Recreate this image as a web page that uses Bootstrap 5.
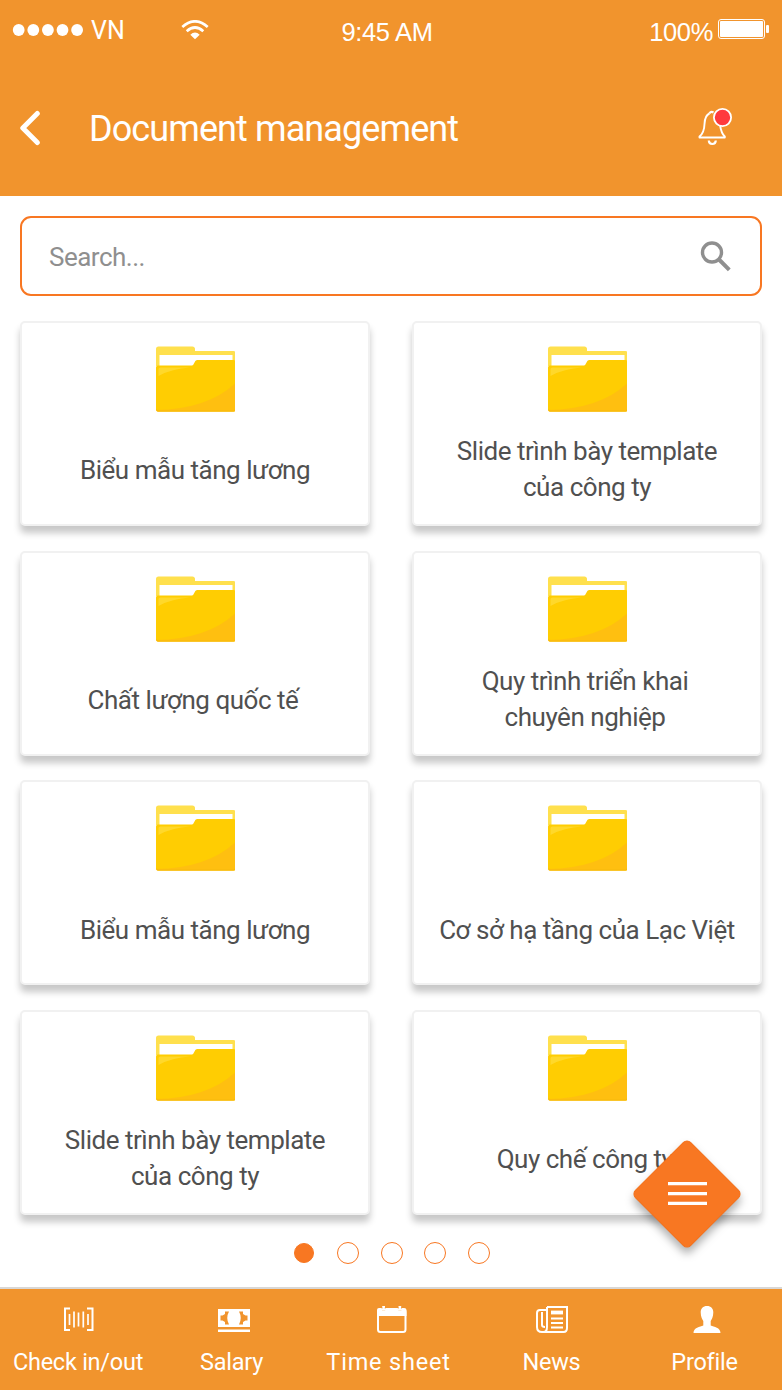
<!DOCTYPE html>
<html lang="vi">
<head>
<meta charset="utf-8">
<meta name="viewport" content="width=device-width, initial-scale=1">
<title>Document management</title>
<link href="https://cdn.jsdelivr.net/npm/bootstrap@5.3.0/dist/css/bootstrap.min.css" rel="stylesheet">
<style>
  body { font-family: Roboto, "Noto Sans", sans-serif; color: #505050; background: #fff; }
  .app { width: 782px; height: 1390px; overflow: hidden; }
  svg { display: block; flex: none; }
  .app-head { height: 196px; background: #f1942d; color: #fff; }
  .status { height: 60px; font-size: 25.5px; line-height: 30px; }
  .status > div { flex: 1 1 0; }
  .carrier { font-size: 25px; font-weight: 400; margin-left: 3px; padding-top: 1px; }
  .wifi { margin-right: 52px; margin-top: -1px; }
  .arial { font-family: "Liberation Sans", Arial, sans-serif; letter-spacing: -.35px; }
  .clock { padding-right: 4px; }
  .battery { margin: 2px 0 0 4px; }
  .title-row { height: 136px; padding: 0 48px 0 18px; }
  .page-title { font-size: 36px; line-height: 42px; font-weight: 400; letter-spacing: -.9px; margin: 2px 0 0 49px; }
  .search { height: 80px; margin: 20px 20px 0; padding: 0 28px 0 27px; border: 2px solid #f87722; border-radius: 11px; }
  .search input { font-size: 26px; line-height: 32px; letter-spacing: -.5px; color: #505050; padding-top: 2px !important; }
  .search input::placeholder { color: #8f8f8f; opacity: 1; }
  .docs { display: grid; grid-template-columns: 350px 350px; column-gap: 42px; row-gap: 24.67px; grid-auto-rows: 205px; margin: 25px 20px 0; }
  .doc { border: 2px solid #f1f1f1; border-radius: 5px; background: #fff; box-shadow: 0 7px 7px rgba(0,0,0,.22); padding-top: 23px; color: #505050; }
  .doc-name { height: 72px; margin-top: 21.3px; font-size: 26px; line-height: 36px; letter-spacing: -.47px; text-align: center; }
  .doc-name.single { padding-top: 2px; }
  .dots { margin: 27px 0 0 293px; gap: 21.8px; height: 22px; }
  .dots span { width: 22px; height: 22px; border: 1px solid #f87722; border-radius: 50%; }
  .dots span.on { width: 20px; height: 20px; margin: 0 1px; background: #f87722; }
  .fab { left: 631px; top: 1138px; filter: drop-shadow(0 6px 4px rgba(0,0,0,.3)); }
  .tabs { height: 103px; border-top: 2px solid #d9d7d5; background: #f1942d; }
  .tabs a { color: #fff; text-decoration: none; font-size: 23.5px; line-height: 28px; letter-spacing: -.25px; padding-top: 14px; white-space: nowrap; }
  .tabs a.wide { letter-spacing: .8px; }
  .tabs svg { margin-bottom: 13px; }
</style>
</head>
<body>
<svg width="0" height="0" class="position-absolute" aria-hidden="true">
  <symbol id="folder" viewBox="0 0 80 66">
    <path d="M0 20V3Q0 .5 2.500 .5H36.500Q38.500 .5 39 2.500V5H77.500Q79.500 5 79.500 7V20Z" fill="#ffe04d"/>
    <path d="M3.500 9H76.500V24H3.500Z" fill="#fff"/>
    <path d="M0 21.500Q0 19.500 2 19.500H36Q37.500 19 38.500 16.500Q39.300 14 41 14H77.500Q79.500 14 79.500 16V63.500Q79.500 65.500 77.500 65.500H2Q0 65.500 0 63.500Z" fill="#ffcd02"/>
    <path d="M79.500 37V63.500Q79.500 65.500 77.500 65.500H2Q.5 65.500 .3 64Q52 63 79.500 37Z" fill="#ffbf10"/>
    <path d="M2.500 30V23Q2.500 21.500 4.500 21.500H34Q16 22.500 2.500 30Z" fill="#ffd82b"/>
    <path d="M.5 63.500Q.7 65 2 65H77.500Q79 65 79 63.500" fill="none" stroke="#f6b80c"/>
  </symbol>
</svg>
<main class="app position-relative mx-auto d-flex flex-column">
  <header class="app-head">
    <div class="status d-flex align-items-center">
      <div class="d-flex align-items-center ps-2">
        <svg width="80" height="14" viewBox="0 0 80 14" fill="#fff"><circle cx="10.700" cy="7" r="5.900"/><circle cx="25.300" cy="7" r="5.900"/><circle cx="39.900" cy="7" r="5.900"/><circle cx="54.500" cy="7" r="5.900"/><circle cx="69.100" cy="7" r="5.900"/></svg>
        <span class="carrier">VN</span>
        <svg class="wifi ms-auto" width="28" height="20" viewBox="0 0 28 20" fill="none" stroke="#fff" stroke-width="2.700"><path d="M1.300 7Q14-4.300 26.700 7M5.700 11.200Q14 3.800 22.300 11.200"/><path d="M9.300 14.700Q14 10.300 18.700 14.700L14 19.200Z" fill="#fff" stroke="none"/></svg>
      </div>
      <div class="arial clock text-center pt-1">9:45 AM</div>
      <div class="arial d-flex justify-content-end pe-2 me-1 pt-1">100%
        <svg class="battery" width="53" height="22" viewBox="0 0 53 22"><rect x="1.500" y=".5" width="46" height="19" rx="2.500" fill="none" stroke="#fff"/><rect x="3" y="2" width="43" height="16" rx="1" fill="#fff"/><rect x="49" y="6" width="3" height="8" rx="1" fill="#fff"/></svg>
      </div>
    </div>
    <div class="title-row d-flex align-items-center">
      <svg width="22" height="36" viewBox="0 0 22 36" fill="none" stroke="#fff" stroke-width="5" stroke-linecap="round" stroke-linejoin="round"><path d="M19.300 3.500L4.800 18L19.300 32.500"/></svg>
      <h1 class="page-title">Document management</h1>
      <svg class="ms-auto mb-1" width="36" height="40" viewBox="0 0 36 40"><path d="M11.500 7.500C7.500 9 6.700 14 6.500 18C6.300 24 4.800 28 1.500 30.500V31.500H26.800V30.500C23.800 28 22.800 24 22 19" fill="none" stroke="#fff" stroke-width="1.900" stroke-linejoin="round"/><path d="M11.300 7.500Q13 5 15.500 6.500" fill="none" stroke="#fff" stroke-width="2.200"/><path d="M10.800 34.500Q11 38 14.300 38Q17.600 38 17.800 34.500" fill="none" stroke="#fff" stroke-width="2.200"/><circle cx="24.500" cy="11.500" r="8.600" fill="#ff3a3d" stroke="#fff" stroke-width="1.800"/></svg>
    </div>
  </header>
  <div class="search d-flex align-items-center">
    <input class="border-0 p-0 bg-transparent flex-grow-1" type="text" placeholder="Search..." aria-label="Search">
    <svg width="32" height="32" viewBox="0 0 32 32" fill="none" stroke="#8f8f8f"><circle cx="12" cy="12.500" r="9.500" stroke-width="3.400"/><path d="M18.500 19L29.300 29.800" stroke-width="4"/></svg>
  </div>
  <section class="docs">
    <a class="doc d-flex flex-column align-items-center text-decoration-none"><svg width="79" height="66" viewBox="0 0 79 66"><use href="#folder" width="80" height="66"/></svg><span class="doc-name single d-flex align-items-center">Biểu mẫu tăng lương</span></a>
    <a class="doc d-flex flex-column align-items-center text-decoration-none"><svg width="79" height="66" viewBox="0 0 79 66"><use href="#folder" width="80" height="66"/></svg><span class="doc-name d-flex align-items-center"><span>Slide trình bày template<br>của công ty</span></span></a>
    <a class="doc d-flex flex-column align-items-center text-decoration-none"><svg width="79" height="66" viewBox="0 0 79 66"><use href="#folder" width="80" height="66"/></svg><span class="doc-name single d-flex align-items-center pe-1">Chất lượng quốc tế</span></a>
    <a class="doc d-flex flex-column align-items-center text-decoration-none"><svg width="79" height="66" viewBox="0 0 79 66"><use href="#folder" width="80" height="66"/></svg><span class="doc-name d-flex align-items-center pe-1"><span>Quy trình triển khai<br>chuyên nghiệp</span></span></a>
    <a class="doc d-flex flex-column align-items-center text-decoration-none"><svg width="79" height="66" viewBox="0 0 79 66"><use href="#folder" width="80" height="66"/></svg><span class="doc-name single d-flex align-items-center">Biểu mẫu tăng lương</span></a>
    <a class="doc d-flex flex-column align-items-center text-decoration-none"><svg width="79" height="66" viewBox="0 0 79 66"><use href="#folder" width="80" height="66"/></svg><span class="doc-name single d-flex align-items-center">Cơ sở hạ tầng của Lạc Việt</span></a>
    <a class="doc d-flex flex-column align-items-center text-decoration-none"><svg width="79" height="66" viewBox="0 0 79 66"><use href="#folder" width="80" height="66"/></svg><span class="doc-name d-flex align-items-center"><span>Slide trình bày template<br>của công ty</span></span></a>
    <a class="doc d-flex flex-column align-items-center text-decoration-none"><svg width="79" height="66" viewBox="0 0 79 66"><use href="#folder" width="80" height="66"/></svg><span class="doc-name single d-flex align-items-center pe-1">Quy chế công ty</span></a>
  </section>
  <div class="dots d-flex align-items-center"><span class="on"></span><span></span><span></span><span></span><span></span></div>
  <svg class="fab position-absolute" width="112" height="112" viewBox="0 0 112 112"><rect x="17" y="17" width="78" height="78" rx="5" transform="rotate(45 56 56)" fill="#f87722" stroke="#f3701a"/><path d="M37 45.700H76M37 55.700H76M37 65.300H76" stroke="#fff" stroke-width="3.200"/></svg>
  <nav class="tabs d-flex mt-auto">
    <a class="d-flex flex-column align-items-center" style="width:156px"><svg width="32" height="32" viewBox="0 0 32 32" fill="none" stroke="#fff"><path d="M8 5.500H3V27H8M25 5.500H30.500V27H25" stroke-width="2"/><path d="M7.500 11V22M12 8.500V24.500M16.500 9.500V23.500M21.300 8.500V24.500M26 11V22" stroke-width="1.700"/></svg>Check in/out</a>
    <a class="d-flex flex-column align-items-center" style="width:151px"><svg class="ms-1" width="32" height="32" viewBox="0 0 32 32"><path fill="#fff" d="M0 6H32V24H0ZM0 26.500H32V29H0Z"/><path fill="#f1942d" d="M7 8.500H11Q7.500 15 11 21.500H7V19L4.500 17.500H2.500V12.500H4.500L7 11ZM25 8.500H21Q24.500 15 21 21.500H25V19L27.500 17.500H29.500V12.500H27.500L25 11Z"/></svg>Salary</a>
    <a class="wide d-flex flex-column align-items-center" style="width:163px"><svg style="margin-left:6px" width="32" height="32" viewBox="0 0 32 32"><path d="M1 7Q1 5 3 5H6.200V3H9V5H22.500V3H25.200V5H28Q30.500 5 30.500 7V13H1Z" fill="#fff"/><path d="M6 4.500V7H9.200V4.500M22.300 4.500V7H25.500V4.500" fill="none" stroke="#f1942d" stroke-width=".8"/><rect x="2" y="6.500" width="27.500" height="22.500" rx="2.500" fill="none" stroke="#fff" stroke-width="2"/></svg>Time sheet</a>
    <a class="d-flex flex-column align-items-center" style="width:163px"><svg width="32" height="32" viewBox="0 0 32 32" fill="none" stroke="#fff" stroke-width="2"><path d="M11 4H31V25Q31 29 27.500 29H6Q1 29 1 24V10Q1 7 4 7H11M11 4V24Q11 29 7.500 29"/><path d="M6 9V22Q6 24 9 24"/><path d="M15 15.500H27M15 20H27M15 24.500H27"/><path d="M15 9.500H27" stroke-width="3.800"/></svg>News</a>
    <a class="d-flex flex-column align-items-center" style="width:143px"><svg class="ms-1" width="32" height="32" viewBox="0 0 32 32" fill="#fff"><path d="M16 3C20 3 22.300 5.500 22.300 9.500C22.300 14 20.500 16.500 19.700 18V22.500C23 24 29.500 24.500 29.500 30H2.500C2.500 24.500 9 24 12.300 22.500V18C11.500 16.500 9.700 14 9.700 9.500C9.700 5.500 12 3 16 3Z"/></svg>Profile</a>
  </nav>
</main>
<script src="https://cdn.jsdelivr.net/npm/bootstrap@5.3.0/dist/js/bootstrap.bundle.min.js"></script>
</body>
</html>
